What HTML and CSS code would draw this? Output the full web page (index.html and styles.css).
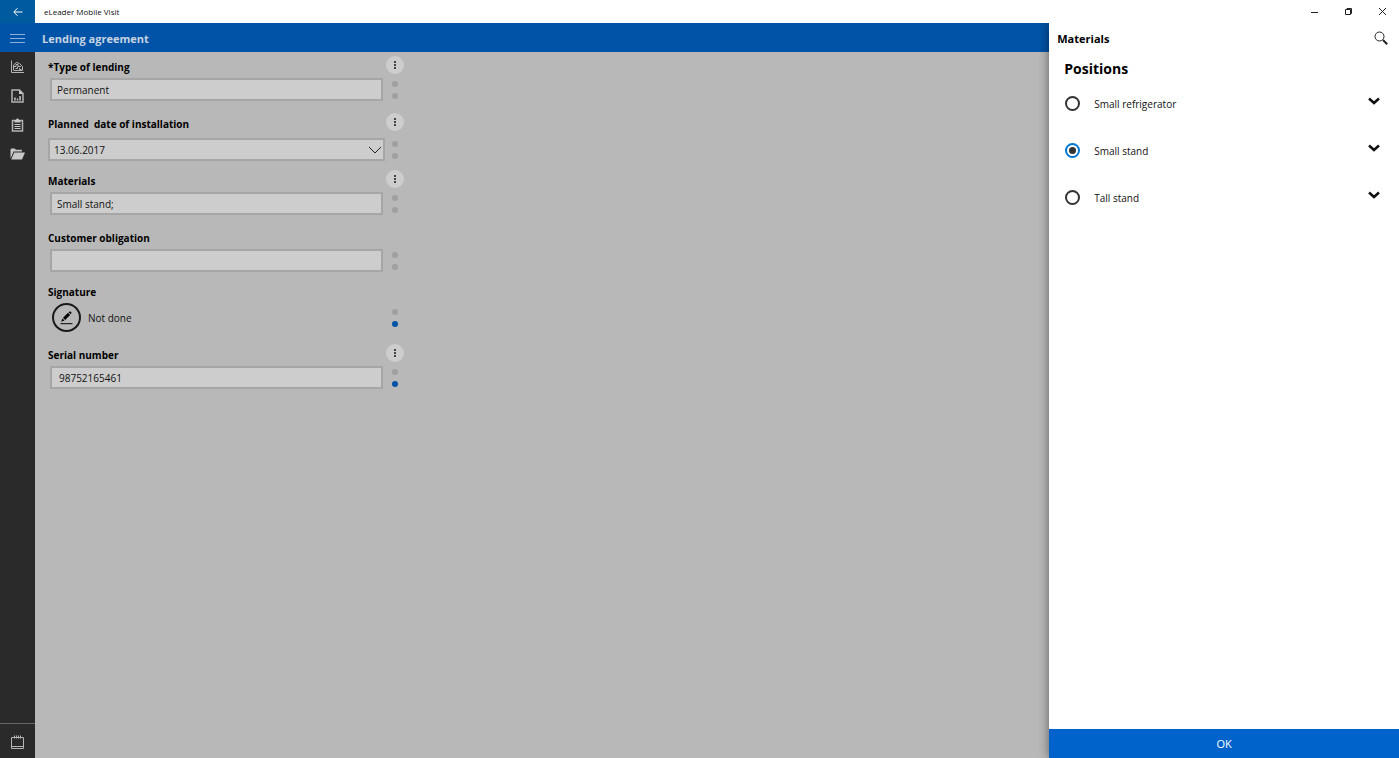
FILE: index.html
```html
<!DOCTYPE html>
<html lang="en">
<head>
  <meta charset="UTF-8" />
  <meta name="viewport" content="width=device-width, initial-scale=1.0" />
  <title>eLeader Mobile Visit</title>
  <link rel="stylesheet" href="styles.css">
</head>
<body>
  <header class="titlebar">
    <button class="back" type="button" aria-label="Back">
      <svg width="10" height="10" viewBox="0 0 10 10"><path d="M9.5 5H1M4.5 1.2L.8 5l3.7 3.8" /></svg>
    </button>
    <span class="titlebar-name">eLeader Mobile Visit</span>
    <div class="window-buttons">
      <button type="button" aria-label="Minimize">
        <svg width="9" height="9" viewBox="0 0 9 9"><path d="M1 5.5h7" /></svg>
      </button>
      <button type="button" aria-label="Restore">
        <svg width="9" height="9" viewBox="0 0 9 9"><path d="M1.5 2.5h5v5h-5zM3 2.5v-1h4.5v5h-1" /></svg>
      </button>
      <button type="button" aria-label="Close">
        <svg width="9" height="9" viewBox="0 0 9 9"><path d="M1 1l7 7M8 1L1 8" /></svg>
      </button>
    </div>
  </header>

  <div class="workspace">
    <div class="app">
      <div class="topbar">
        <button class="menu" type="button" aria-label="Menu">
          <svg width="15" height="10" viewBox="0 0 15 10"><path d="M0 1.5h15M0 5.5h15M0 9.5h15" /></svg>
        </button>
        <h1>Lending agreement</h1>
      </div>

      <div class="content">
        <nav class="sidebar">
          <button type="button" aria-label="Statistics">
            <svg width="13" height="13" viewBox="0 0 13 13">
              <path class="line" d="M.5.5v12H13M2.5 10.5h9" />
              <path class="line" d="M2.5 10V5L5.5 2.5l3 1 3 3V10" />
              <path class="line" d="M2 6.5h3v-2h2v2h3M4.5 8.5h2v-2M8.5 8v1.5h2" />
            </svg>
          </button>
          <button type="button" aria-label="Reports">
            <svg width="13" height="14" viewBox="0 0 13 14">
              <path class="line thick" d="M1 1h7.5L12 4.5V13H1z" />
              <path d="M8 1v4h4zM3.2 8.5h1.5v3H3.2zM5.8 9.5h1.4v2H5.8zM8.3 7h1.5v4.5H8.3z" />
            </svg>
          </button>
          <button type="button" aria-label="Tasks">
            <svg width="13" height="14" viewBox="0 0 13 14">
              <path class="line thick" d="M1.5 2.5h10v10.5h-10z" />
              <path d="M3.5 2h1.6a1.4 1.4 0 0 1 2.8 0h1.6v2.5h-6zM3.5 6h6v1h-6zM3.5 8h6v1h-6zM3.5 10h6v1h-6z" />
            </svg>
          </button>
          <button type="button" aria-label="Documents">
            <svg width="15" height="12" viewBox="0 0 15 12">
              <path d="M.5 10.5V1.5L1.5.5h3.2l1.2 1.3h6v1.7H3.6z" />
              <path d="M4.2 4.5H15L12 11.5H1.2z" />
            </svg>
          </button>
          <button class="sidebar-bottom" type="button" aria-label="Calendar">
            <svg width="13" height="14" viewBox="0 0 13 14">
              <path class="line" d="M.5 2.5h12v11H.5zM.5 11.5h12M3.5.5v3M5.5.5v3M7.5.5v3M9.5.5v3" />
            </svg>
          </button>
        </nav>

        <form class="form">
          <div class="field">
            <div class="field-head">
              <label for="lending-type">*Type of lending</label>
              <button class="more" type="button" aria-label="More options"><i></i><i></i><i></i></button>
            </div>
            <div class="field-row">
              <input id="lending-type" class="box" type="text" value="Permanent" />
              <div class="dots"><i></i><i></i></div>
            </div>
          </div>

          <div class="field">
            <div class="field-head">
              <label for="install-date">Planned  date of installation</label>
              <button class="more" type="button" aria-label="More options"><i></i><i></i><i></i></button>
            </div>
            <div class="field-row field-row-date">
              <div class="date">
                <select id="install-date" class="box">
                  <option>13.06.2017</option>
                </select>
                <svg width="14" height="8" viewBox="0 0 14 8"><path d="M1 1l6 6 6-6" /></svg>
              </div>
              <div class="dots"><i></i><i></i></div>
            </div>
          </div>

          <div class="field">
            <div class="field-head">
              <label for="materials">Materials</label>
              <button class="more" type="button" aria-label="More options"><i></i><i></i><i></i></button>
            </div>
            <div class="field-row">
              <input id="materials" class="box" type="text" value="Small stand;" />
              <div class="dots"><i></i><i></i></div>
            </div>
          </div>

          <div class="field field-short">
            <div class="field-head">
              <label for="obligation">Customer obligation</label>
            </div>
            <div class="field-row">
              <input id="obligation" class="box" type="text" value="" />
              <div class="dots"><i></i><i></i></div>
            </div>
          </div>

          <div class="field">
            <div class="field-head">
              <label for="signature">Signature</label>
            </div>
            <div class="field-row">
              <button id="signature" class="sign" type="button" aria-label="Sign">
                <svg width="13" height="14" viewBox="0 0 13 14">
                  <path d="M8.6 1.2L10.2.3l1.4 1.5-.8 1.4zM8 1.8l2.1 2.1-5 5L3 6.8zM2.5 7.4l2 2L1 10.8z" />
                  <path d="M.5 12.2h12v1H.5z" />
                </svg>
              </button>
              <span class="sign-state">Not done</span>
              <div class="dots"><i></i><i class="on"></i></div>
            </div>
          </div>

          <div class="field">
            <div class="field-head">
              <label for="serial">Serial number</label>
              <button class="more" type="button" aria-label="More options"><i></i><i></i><i></i></button>
            </div>
            <div class="field-row">
              <input id="serial" class="box box-number" type="text" value="98752165461" />
              <div class="dots"><i></i><i class="on"></i></div>
            </div>
          </div>
        </form>
      </div>
    </div>

    <aside class="panel">
      <div class="panel-head">
        <h2>Materials</h2>
        <button type="button" aria-label="Search">
          <svg width="14" height="14" viewBox="0 0 14 14">
            <circle cx="5.5" cy="5.5" r="4.5" />
            <path d="M9 9l4.2 4.2" />
          </svg>
        </button>
      </div>
      <h3>Positions</h3>
      <ul class="positions">
        <li>
          <label><input type="radio" name="position" />Small refrigerator</label>
          <button type="button" aria-label="Expand"><svg width="12" height="8" viewBox="0 0 12 8"><path d="M1 1.5l5 4.5 5-4.5" /></svg></button>
        </li>
        <li>
          <label><input type="radio" name="position" checked />Small stand</label>
          <button type="button" aria-label="Expand"><svg width="12" height="8" viewBox="0 0 12 8"><path d="M1 1.5l5 4.5 5-4.5" /></svg></button>
        </li>
        <li>
          <label><input type="radio" name="position" />Tall stand</label>
          <button type="button" aria-label="Expand"><svg width="12" height="8" viewBox="0 0 12 8"><path d="M1 1.5l5 4.5 5-4.5" /></svg></button>
        </li>
      </ul>
      <button class="ok" type="button">OK</button>
    </aside>
  </div>
</body>
</html>
```
FILE: styles.css
```css
* {
  box-sizing: border-box;
}
body {
  margin: 0;
  height: 100vh;
  display: flex;
  flex-direction: column;
  font-family: "Open Sans", "Noto Sans", sans-serif;
  font-size: 10px;
  line-height: 16px;
  color: #111;
  background: #fff;
}
button {
  display: flex;
  align-items: center;
  justify-content: center;
  padding: 0;
  border: 0;
  background: none;
  font: inherit;
  color: inherit;
  cursor: pointer;
}
svg {
  display: block;
  flex: none;
}
h1, h2, h3, ul {
  margin: 0;
  padding: 0;
}
h1, h2 {
  padding-top: 2px;
  font-size: 11px;
  font-weight: 700;
}

/* window title bar */
.titlebar {
  display: flex;
  align-items: stretch;
  height: 23px;
  flex: none;
}
.titlebar svg {
  fill: none;
  stroke: #222;
}
.back {
  width: 35px;
  background: #005a9e;
}
.titlebar .back svg {
  stroke: #fff;
}
.titlebar-name {
  padding: 0 9px;
  font-size: 8px;
  line-height: 23px;
}
.window-buttons {
  display: flex;
  margin-left: auto;
}
.window-buttons button {
  width: 34px;
}

.workspace {
  display: flex;
  flex: 1;
  min-height: 0;
}
.app {
  display: flex;
  flex-direction: column;
  flex: 1;
}
.topbar {
  display: flex;
  align-items: center;
  height: 29px;
  background: #0053a6;
  color: #c8d4e2;
}
.topbar h1 {
  padding-left: 7px;
}
.menu {
  width: 35px;
  height: 29px;
}
.menu svg {
  fill: none;
  stroke: #8fb0d6;
}
.content {
  display: flex;
  flex: 1;
}

/* sidebar */
.sidebar {
  display: flex;
  flex-direction: column;
  width: 35px;
  background: #2a2a2a;
}
.sidebar button {
  height: 29px;
}
.sidebar svg {
  fill: #c8c8c8;
}
.sidebar .line {
  fill: none;
  stroke: #b4b4b4;
}
.sidebar .thick {
  stroke-width: 1.5;
}
.sidebar .sidebar-bottom {
  height: 35px;
  margin-top: auto;
  padding-top: 2px;
  border-top: 1px solid #666;
}

/* form */
.form {
  flex: 1;
  padding: 4px 13px;
  background: #b8b8b8;
}
.field {
  width: 356px;
  padding-bottom: 12px;
}
.field-short {
  padding-bottom: 9px;
}
.field-head {
  display: flex;
  align-items: flex-start;
  justify-content: space-between;
  height: 22px;
}
.field-head label {
  font-weight: 700;
  line-height: 22px;
  white-space: pre;
  color: #000;
}
.more {
  flex-direction: column;
  gap: 1px;
  width: 18px;
  height: 18px;
  border-radius: 50%;
  background: #cdcdcd;
}
.more i {
  width: 2px;
  height: 2px;
  background: #444;
}
.field-row {
  display: flex;
  align-items: center;
  padding-left: 2px;
}
.box {
  width: 333px;
  height: 23px;
  padding: 0 5px;
  border: 2px solid #a6a6a6;
  border-radius: 0;
  background: #cdcdcd;
  font: inherit;
  color: #111;
}
.box-number {
  padding-left: 7px;
}
.field-row-date {
  padding-left: 0;
  padding-top: 3px;
  margin-bottom: -3px;
}
.date {
  position: relative;
}
.date .box {
  display: block;
  width: 337px;
  padding: 0 4px;
  appearance: none;
}
.date svg {
  position: absolute;
  right: 3px;
  top: 8px;
  fill: none;
  stroke: #222;
  pointer-events: none;
}
.dots {
  display: flex;
  flex-direction: column;
  gap: 6px;
  margin-left: auto;
  margin-right: 6px;
}
.dots i {
  width: 6px;
  height: 6px;
  border-radius: 50%;
  background: #a0a0a0;
}
.dots .on {
  background: #0053a6;
}
.sign {
  width: 29px;
  height: 29px;
  margin-left: 2px;
  border: 2px solid #1a1a1a;
  border-radius: 50%;
}
.sign-state {
  margin-left: 7px;
}

/* materials panel */
.panel {
  display: flex;
  flex-direction: column;
  width: 25%;
  background: #fff;
  box-shadow: 0 0 10px rgba(0, 0, 0, 0.5);
  clip-path: inset(0 0 0 -10px);
}
.panel-head {
  display: flex;
  align-items: center;
  justify-content: space-between;
  height: 30px;
  padding: 0 11px 0 8px;
  color: #000;
}
.panel-head svg {
  fill: none;
  stroke: #222;
}
.panel-head path {
  stroke-width: 2;
}
.panel h3 {
  padding-left: 15px;
  font-size: 14px;
  line-height: 32px;
  height: 27px;
  color: #000;
}
.positions {
  list-style: none;
}
.positions li {
  display: flex;
  align-items: center;
  justify-content: space-between;
  height: 47px;
  padding: 0 19px 0 16px;
}
.positions label {
  display: flex;
  align-items: center;
  gap: 14px;
}
.positions input {
  display: grid;
  place-items: center;
  width: 15px;
  height: 15px;
  margin: 0;
  border: 2px solid #333;
  border-radius: 50%;
  appearance: none;
}
.positions input:checked {
  border-color: #0078d7;
}
.positions input:checked::before {
  content: "";
  width: 7px;
  height: 7px;
  border-radius: 50%;
  background: #333;
}
.positions button {
  padding-bottom: 5px;
}
.positions svg {
  fill: none;
  stroke: #111;
  stroke-width: 2.5;
}
.ok {
  height: 29px;
  margin-top: auto;
  background: #0063cc;
  color: #fff;
  font-size: 11px;
}
```
